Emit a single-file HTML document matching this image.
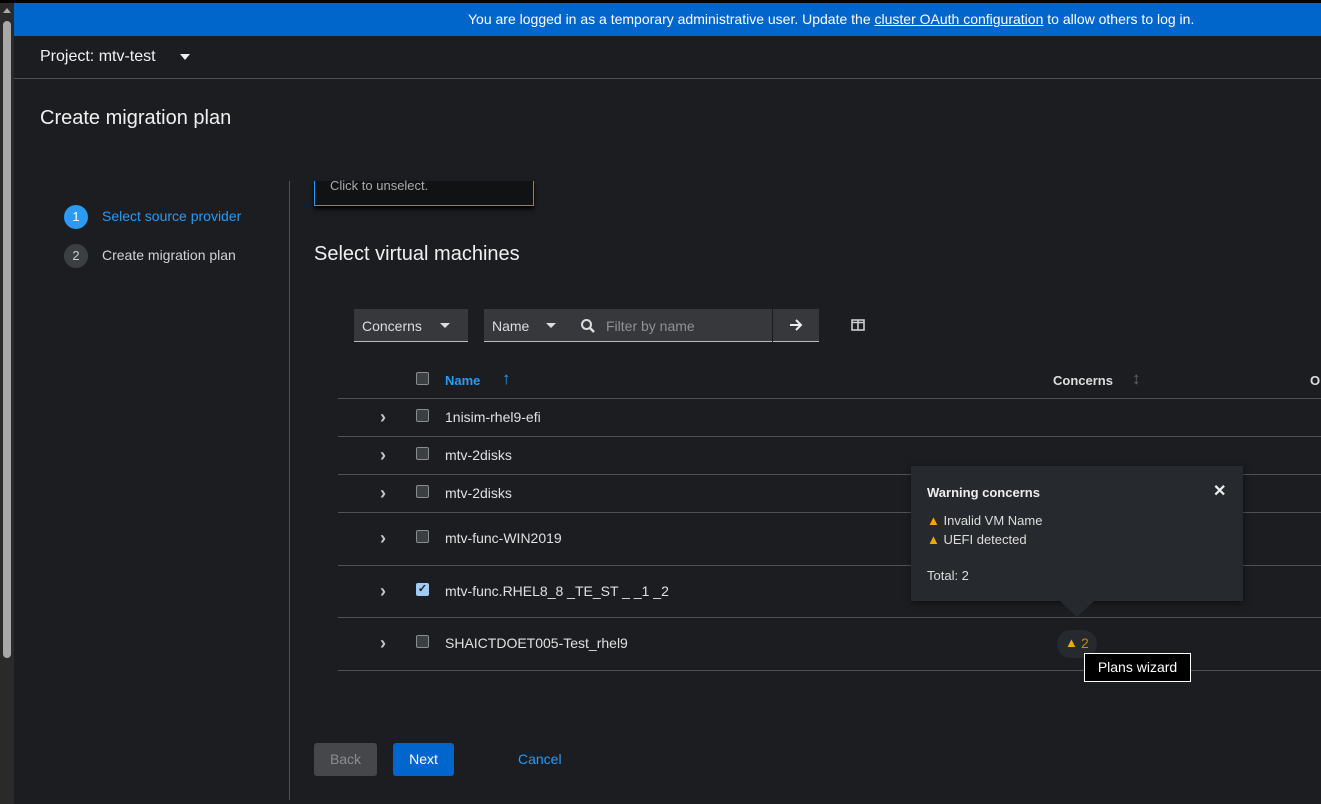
<!DOCTYPE html>
<html><head><style>
*{box-sizing:border-box;margin:0;padding:0}
body{width:1321px;height:804px;background:#1b1d21;font-family:"Liberation Sans",sans-serif;color:#e0e0e0;position:relative;overflow:hidden;font-size:14px}
.a{position:absolute}
.cb{position:absolute;width:13px;height:13px;border:1px solid #8a8d90;border-radius:2px;background:#3c3f42}
.chev{position:absolute;color:#c7c7c7;font-size:18px;font-weight:bold;line-height:18px}
.line{position:absolute;left:338px;right:0;height:1px;background:#4f5255}
.name{position:absolute;left:445px;font-size:14px;color:#e0e0e0}
</style></head><body>
<div class="a" style="left:0;top:0;width:1321px;height:3px;background:#000"></div>
<div class="a" style="left:0;top:3px;width:14px;height:801px;background:#2a2a2a"></div>
<div class="a" style="left:3px;top:8px;width:0;height:0;border-left:4px solid transparent;border-right:4px solid transparent;border-bottom:5px solid #aaa"></div>
<div class="a" style="left:3px;top:21px;width:8px;height:637px;background:#a8a8a8;border-radius:4px"></div>
<div class="a" style="left:14px;top:3px;width:1307px;height:33px;background:#0066cc;color:#fff;font-size:14px;line-height:33px;padding-left:454px">You are logged in as a temporary administrative user. Update the <u>cluster OAuth configuration</u> to allow others to log in.</div>
<div class="a" style="left:14px;top:78px;width:1307px;height:1px;background:#4f5255"></div>
<div class="a" style="left:40px;top:48px;font-size:16px;color:#f0f0f0">Project: mtv-test</div>
<div class="a" style="left:180px;top:54px;border-left:5px solid transparent;border-right:5px solid transparent;border-top:6px solid #f0f0f0"></div>
<div class="a" style="left:40px;top:107px;font-size:20px;color:#f0f0f0">Create migration plan</div>
<div class="a" style="left:289px;top:181px;width:1px;height:619px;background:#4f5255"></div>
<div class="a" style="left:64px;top:205px;width:24px;height:24px;border-radius:50%;background:#2b9af3;color:#fff;text-align:center;line-height:24px;font-size:13px">1</div>
<div class="a" style="left:102px;top:208px;color:#2b9af3;font-size:14px">Select source provider</div>
<div class="a" style="left:64px;top:244px;width:24px;height:24px;border-radius:50%;background:#3c3f42;color:#ccc;text-align:center;line-height:24px;font-size:13px">2</div>
<div class="a" style="left:102px;top:247px;color:#d2d2d2;font-size:14px">Create migration plan</div>
<div class="a" style="left:314px;top:181px;width:220px;height:25px;background:#101214;border:1px solid #2b9af3;border-top:none;box-shadow:0 3px 4px #000"></div>
<div class="a" style="left:330px;top:178px;color:#aaa;font-size:13px">Click to unselect.</div>
<div class="a" style="left:314px;top:243px;font-size:20px;color:#f0f0f0">Select virtual machines</div>
<div class="a" style="left:354px;top:309px;width:114px;height:33px;background:#36383c;border-bottom:1px solid #b8bbbe"></div>
<div class="a" style="left:362px;top:318px;font-size:14px;color:#ddd">Concerns</div>
<div class="a" style="left:440px;top:323px;border-left:5px solid transparent;border-right:5px solid transparent;border-top:5px solid #ddd"></div>
<div class="a" style="left:484px;top:309px;width:335px;height:33px;background:#36383c;border-bottom:1px solid #b8bbbe"></div>
<div class="a" style="left:772px;top:309px;width:1px;height:33px;background:#1b1d21"></div>
<div class="a" style="left:492px;top:318px;font-size:14px;color:#ddd">Name</div>
<div class="a" style="left:546px;top:323px;border-left:5px solid transparent;border-right:5px solid transparent;border-top:5px solid #ddd"></div>
<svg class="a" style="left:580px;top:318px" width="16" height="16" viewBox="0 0 16 16"><circle cx="6.5" cy="6.5" r="4.5" stroke="#ddd" stroke-width="2" fill="none"/><path d="M10 10l4 4" stroke="#ddd" stroke-width="2.5"/></svg>
<div class="a" style="left:606px;top:318px;font-size:14px;color:#8f9194">Filter by name</div>
<svg class="a" style="left:789px;top:318px" width="14" height="14" viewBox="0 0 14 14"><path d="M1 7h11M7 2l5 5-5 5" stroke="#eee" stroke-width="2" fill="none"/></svg>
<svg class="a" style="left:851px;top:319px" width="14" height="12" viewBox="0 0 14 12"><rect x="1" y="1" width="12" height="10" fill="none" stroke="#ccc" stroke-width="1.6"/><path d="M7 1v10M1 3.5h12" stroke="#ccc" stroke-width="1.6"/></svg>
<div class="cb" style="left:416px;top:372px"></div>
<div class="a" style="left:445px;top:373px;color:#2b9af3;font-weight:bold;font-size:13px">Name</div>
<div class="a" style="left:502px;top:369px;color:#2b9af3;font-size:17px;font-weight:bold">↑</div>
<div class="a" style="left:1053px;top:373px;color:#ddd;font-weight:bold;font-size:13px">Concerns</div>
<div class="a" style="left:1132px;top:369px;color:#666;font-size:17px">↕</div>
<div class="a" style="left:1310px;top:373px;color:#ddd;font-weight:bold;font-size:13px">O</div>
<div class="line" style="top:398px"></div>
<div class="chev" style="left:380px;top:408px">›</div><div class="cb" style="left:416px;top:409px"></div><div class="name" style="top:409px">1nisim-rhel9-efi</div>
<div class="line" style="top:436px"></div>
<div class="chev" style="left:380px;top:446px">›</div><div class="cb" style="left:416px;top:447px"></div><div class="name" style="top:447px">mtv-2disks</div>
<div class="line" style="top:474px"></div>
<div class="chev" style="left:380px;top:484px">›</div><div class="cb" style="left:416px;top:485px"></div><div class="name" style="top:485px">mtv-2disks</div>
<div class="line" style="top:512px"></div>
<div class="chev" style="left:380px;top:529px">›</div><div class="cb" style="left:416px;top:530px"></div><div class="name" style="top:530px">mtv-func-WIN2019</div>
<div class="line" style="top:565px"></div>
<div class="chev" style="left:380px;top:582px">›</div><div class="cb" style="left:416px;top:583px;background:#9fcbf5;border-color:#9fcbf5;color:#1b1d21;font-size:11px;line-height:11px;text-align:center;font-weight:bold">✓</div><div class="name" style="top:583px">mtv-func.RHEL8_8 _TE_ST _ _1 _2</div>
<div class="line" style="top:617px"></div>
<div class="chev" style="left:380px;top:634px">›</div><div class="cb" style="left:416px;top:635px"></div><div class="name" style="top:635px">SHAICTDOET005-Test_rhel9</div>
<div class="line" style="top:670px"></div>
<div class="a" style="left:1057px;top:630px;width:40px;height:28px;border-radius:14px;background:#26292d"></div>
<div class="a" style="left:1065px;top:635px;color:#f0ab00;font-size:13px">▲</div>
<div class="a" style="left:1081px;top:635px;color:#c58c00;font-size:14px">2</div>
<div class="a" style="left:1084px;top:653px;width:107px;height:29px;background:#000;border:1px solid #fff;color:#fff;font-size:14px;line-height:27px;text-align:center">Plans wizard</div>
<div class="a" style="left:911px;top:466px;width:332px;height:135px;background:#26292d;box-shadow:0 2px 6px rgba(0,0,0,.5)"></div>
<div class="a" style="left:1060px;top:601px;border-left:17px solid transparent;border-right:17px solid transparent;border-top:16px solid #26292d"></div>
<div class="a" style="left:927px;top:485px;font-weight:bold;font-size:13px;color:#eee">Warning concerns</div>
<div class="a" style="left:1213px;top:481px;font-weight:bold;font-size:16px;color:#eee">✕</div>
<div class="a" style="left:927px;top:513px;font-size:13px;color:#ddd"><span style="color:#f0ab00">▲</span> Invalid VM Name</div>
<div class="a" style="left:927px;top:532px;font-size:13px;color:#ddd"><span style="color:#f0ab00">▲</span> UEFI detected</div>
<div class="a" style="left:927px;top:568px;font-size:13px;color:#ddd">Total: 2</div>
<div class="a" style="left:314px;top:743px;width:63px;height:33px;background:#45474b;border-radius:3px;color:#8a8d90;text-align:center;line-height:33px">Back</div>
<div class="a" style="left:393px;top:743px;width:61px;height:33px;background:#0066cc;border-radius:3px;color:#fff;text-align:center;line-height:33px">Next</div>
<div class="a" style="left:518px;top:751px;color:#2b9af3">Cancel</div>
</body></html>
